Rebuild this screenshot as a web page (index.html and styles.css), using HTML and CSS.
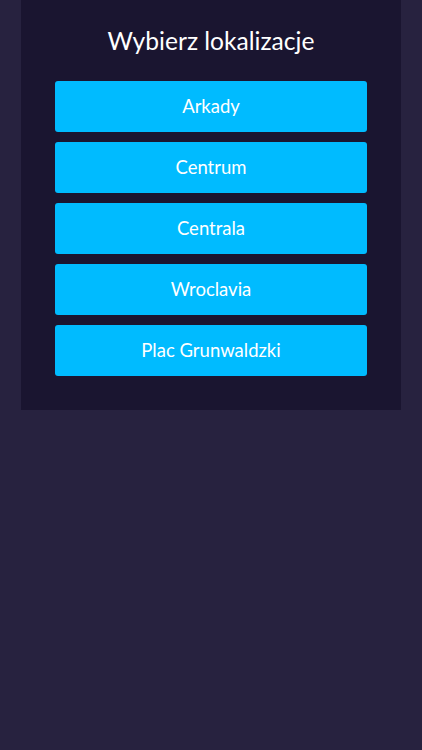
FILE: index.html
```html
<!DOCTYPE html>
<html lang="pl">
  <head>
    <meta charset="UTF-8" />
    <meta name="viewport" content="width=device-width, initial-scale=1.0" />
    <title>Wybierz lokalizacje</title>
    <link rel="stylesheet" href="styles.css">
  </head>
  <body>
    <div class="panel">
      <h1 class="panel-title">Wybierz lokalizacje</h1>
      <div class="locations">
        <button class="location">Arkady</button>
        <button class="location">Centrum</button>
        <button class="location">Centrala</button>
        <button class="location">Wroclavia</button>
        <button class="location">Plac Grunwaldzki</button>
      </div>
    </div>
  </body>
</html>
```

FILE: styles.css
```css
* {
  margin: 0;
  padding: 0;
  box-sizing: border-box;
}
body {
  background: #27223f;
  font-family: Lato, "Open Sans", sans-serif;
  height: 100vh;
}
.panel {
  background: #1a1530;
  margin: 0 21px;
  padding: 25px 34px 34px;
}
.panel-title {
  color: #ffffff;
  font-size: 24.6px;
  font-weight: 400;
  line-height: 32px;
  text-align: center;
  margin-bottom: 24px;
}
.locations {
  display: flex;
  flex-direction: column;
  gap: 10px;
}
.location {
  background: #00bbff;
  color: #ffffff;
  border: none;
  border-radius: 3px;
  height: 51px;
  font: normal 18.5px/1 Lato, sans-serif;
}
```
